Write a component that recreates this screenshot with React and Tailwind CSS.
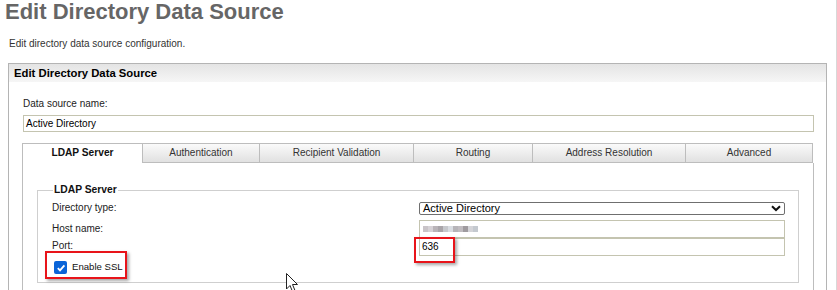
import React from "react";

const tabs = [
  { label: "LDAP Server", w: "w-[120px]", active: true },
  { label: "Authentication", w: "w-[117px]" },
  { label: "Recipient Validation", w: "w-[154px]" },
  { label: "Routing", w: "w-[119px]" },
  { label: "Address Resolution", w: "w-[153px]" },
  { label: "Advanced", w: "w-[128px]" },
];

const blur = ["#c9c4c8", "#d6d2d6", "#b9b4b8", "#a9a5a9", "#c6c8cc", "#d9dde2", "#b6b4b8", "#c0bcc0", "#9f9b9f", "#d4d4d8", "#c4c9cf"];

export default function App() {
  return (
    <div className="relative w-[837px] h-[290px] overflow-hidden bg-white text-[10px] text-[#222] font-['Liberation_Sans',Arial,sans-serif]">
      <div className="absolute right-0 top-0 w-px h-full bg-[#d8d8d8]" />
      <h1 className="pl-[5px] text-[22px] leading-[24px] font-bold text-[#666666] h-[34px]">
        Edit Directory Data Source
      </h1>
      <p className="pl-[9px] text-[10px] leading-[14px] text-[#333] h-[29px] pt-[3px]">
        Edit directory data source configuration.
      </p>
      <div className="ml-[8px] w-[819px] h-[240px] border border-[#b4b4b4]">
        <div className="h-[18px] bg-gradient-to-b from-[#e4e4e4] to-[#f6f6f6] pl-[5px] text-[11.3px] leading-[18px] font-bold text-black">
          Edit Directory Data Source
        </div>
        <div className="pl-[14px]">
          <div className="pt-[15px] h-[33px] leading-[14px] text-[10px] text-[#222]">Data source name:</div>
          <div className="w-[791px] h-[17px] border border-[#c4c4b0] px-[2px] text-[10px] leading-[15px] text-black">
            Active Directory
          </div>
          <div className="mt-[11px] -ml-[1px] w-[792px]">
            <div className="flex h-[20px]">
              {tabs.map((t) =>
                t.active ? (
                  <div key={t.label} className={`${t.w} h-[20px] border-t border-l border-[#bdbdbd] bg-white text-center font-bold text-[10.2px] leading-[18px] text-[#111]`}>
                    {t.label}
                  </div>
                ) : (
                  <div key={t.label} className={`${t.w} h-[20px] border-t border-l border-b border-[#bdbdbd] last:border-r bg-gradient-to-b from-[#fafafa] to-[#e1e1e1] text-center text-[10px] leading-[18px] text-[#333]`}>
                    {t.label}
                  </div>
                )
              )}
            </div>
            <div className="h-[130px] border-l border-r border-[#bdbdbd] pt-[20px] pl-[14px] pr-[15px]">
              <fieldset className="border border-[#cfcfcf] h-[100px] pl-[14px] pr-[13px] pt-0">
                <legend className="ml-[1px] px-[1px] text-[10.3px] font-bold leading-[14px] text-[#111]">LDAP Server</legend>
                <div className="grid grid-cols-[367px_1fr] mt-[4px]">
                  <div className="h-[19px] leading-[14px] text-[10px]">Directory type:</div>
                  <div className="h-[19px] pt-[1px]">
                    <div className="w-full h-[13px] border border-[#6f6f6f] rounded-[2px] flex items-center justify-between px-[3px] text-[11px] leading-[11px] text-black">
                      <span>Active Directory</span>
                      <svg width="10" height="7" viewBox="0 0 10 7"><path d="M1 1.2 L5 5 L9 1.2" fill="none" stroke="#111" strokeWidth="2" /></svg>
                    </div>
                  </div>
                  <div className="h-[18px] leading-[18px] text-[10px]">Host name:</div>
                  <div className="h-[18px] border border-[#c4c4b0] flex items-center pl-[3px] w-[366px]">
                    {blur.map((c, i) => (
                      <span key={i} className="inline-block w-[5px] h-[6px]" style={{ background: c }} />
                    ))}
                  </div>
                  <div className="h-[18px] leading-[15px] text-[10px]">Port:</div>
                  <div className="h-[18px] border border-[#c4c4b0] pl-[2px] text-[10px] leading-[16px] text-black w-[366px]">636</div>
                </div>
                <label className="flex items-center gap-[5px] pl-[2px] mt-[5px] h-[13px] text-[9.6px]">
                  <span className="w-[13px] h-[13px] rounded-[2px] bg-[#0a64d8] flex items-center justify-center">
                    <svg width="10" height="10" viewBox="0 0 10 10"><path d="M1.8 5.2 L4 7.4 L8.4 2.4" fill="none" stroke="white" strokeWidth="1.8" /></svg>
                  </span>
                  <span className="text-[#111]">Enable SSL</span>
                </label>
              </fieldset>
            </div>
          </div>
        </div>
      </div>
      {/* annotation boxes */}
      <div className="absolute left-[45px] top-[251px] w-[82px] h-[28px] border-2 border-[#e8141a] shadow-[2px_2px_3px_rgba(0,0,0,0.35)]" />
      <div className="absolute left-[414px] top-[237px] w-[41px] h-[26px] border-2 border-[#e8141a] shadow-[2px_2px_3px_rgba(0,0,0,0.35)]" />
      {/* cursor */}
      <svg className="absolute left-[286px] top-[273px]" width="14" height="20" viewBox="0 0 14 20">
        <path d="M0.5 0.5 L0.5 16 L4 12.5 L6.5 18.5 L9 17.5 L6.5 11.5 L11.5 11.5 Z" fill="white" stroke="#222" strokeWidth="1" />
      </svg>
    </div>
  );
}
